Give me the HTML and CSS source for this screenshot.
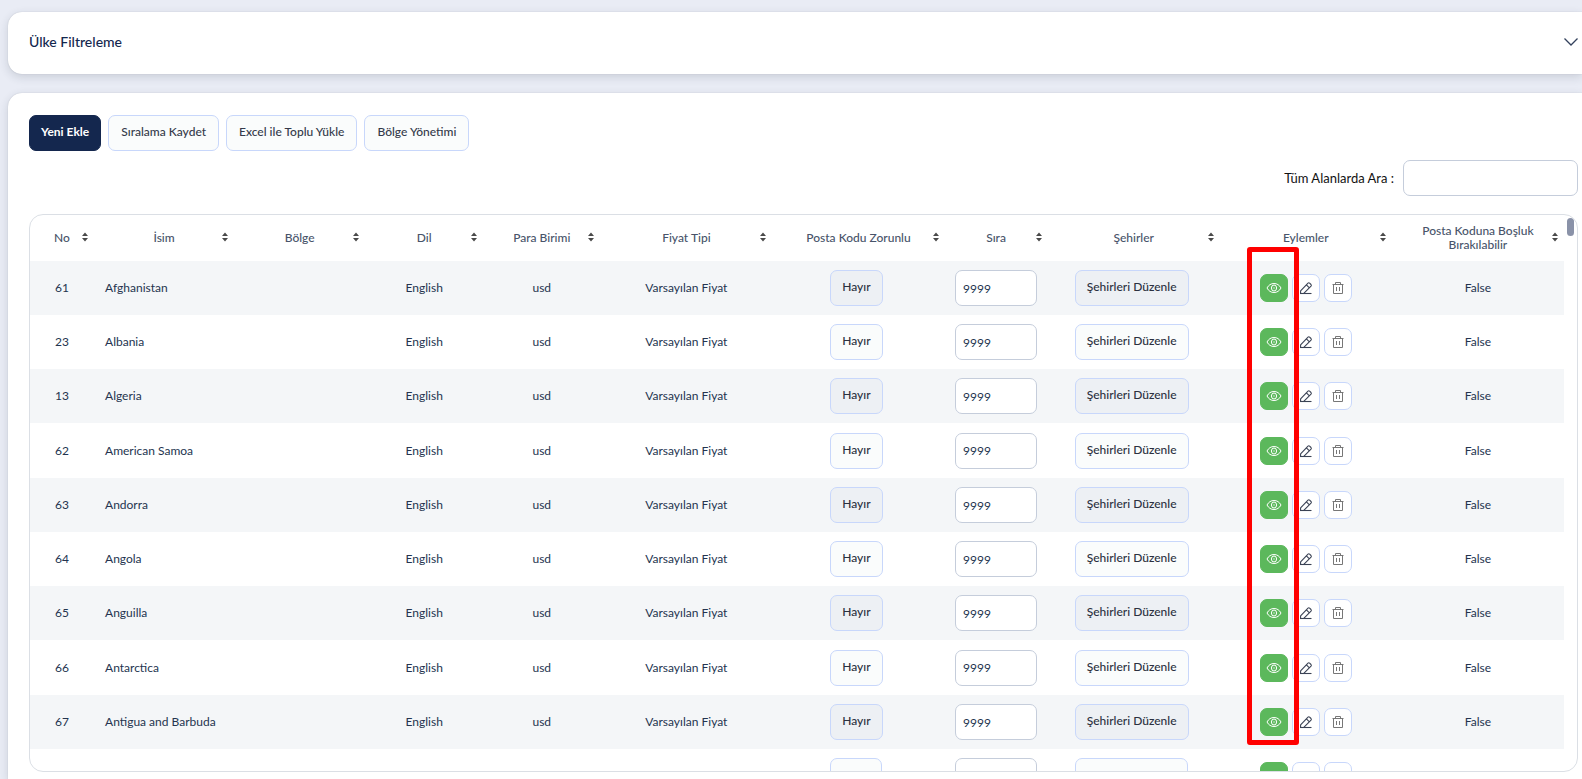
FILE: index.html
```html
<!DOCTYPE html>
<html lang="tr">
<head>
<meta charset="utf-8">
<title>Ülke Yönetimi</title>
<link rel="stylesheet" href="styles.css">
</head>
<body>
<svg class="sprite" aria-hidden="true">
  <symbol id="icon-sort" viewBox="0 0 8 10"><path d="M4 0.400 7 4H1zM4 9.600 1 6h6z" fill="currentColor"/></symbol>
  <symbol id="icon-eye" viewBox="0 0 16 16"><g fill="none" stroke="currentColor"><path d="M1 8C2.600 5 5 3.500 8 3.500S13.400 5 15 8c-1.600 3-4 4.500-7 4.500S2.600 11 1 8z"/><ellipse cx="8" cy="8" rx="2.600" ry="3"/><path d="M8 7.200v1.600" stroke-width=".8"/></g></symbol>
  <symbol id="icon-edit" viewBox="0 0 16 16"><g fill="none" stroke="currentColor" stroke-width="1.100" stroke-linejoin="round"><path d="M2.600 13.400V10.900L10 3.100q.8-.7 1.600 0L13 4.500q.7.800 0 1.600L5.800 13.400M8.400 4.800l3 3"/><path d="M2 13.500h11.500"/></g></symbol>
  <symbol id="icon-trash" viewBox="0 0 16 16"><g fill="none" stroke="currentColor"><path d="M2.500 4.500h11M5.500 4.500v-2h5v2M3.500 4.500v9h9v-9"/><path d="M6.500 7v4M9.500 7v4"/></g></symbol>
</svg>
<main class="page">
  <section class="panel filter">
    <h2 class="filter-title">Ülke Filtreleme</h2>
    <button class="filter-toggle" type="button" aria-label="Filtreyi aç"><svg width="14" height="8" viewBox="0 0 14 8"><path d="M.5.5 7 7 13.500.5" fill="none" stroke="currentColor" stroke-width="1.300"/></svg></button>
  </section>
  <section class="panel list">
    <div class="toolbar">
      <button class="btn btn-dark" type="button">Yeni Ekle</button>
      <button class="btn" type="button">Sıralama Kaydet</button>
      <button class="btn" type="button">Excel ile Toplu Yükle</button>
      <button class="btn" type="button">Bölge Yönetimi</button>
    </div>
    <div class="search">
      <label for="search">Tüm Alanlarda Ara :</label>
      <input class="field search-field" id="search" type="text">
    </div>
    <div class="table-wrap">
      <table class="countries">
        <colgroup><col class="c-no"><col class="c-name"><col class="c-region"><col class="c-lang"><col class="c-money"><col class="c-wide"><col class="c-wide"><col class="c-order"><col class="c-wide"><col class="c-wide"><col class="c-wide"></colgroup>
        <thead><tr id="head"></tr></thead>
        <tbody id="rows"></tbody>
      </table>
      <span class="thumb"></span>
    </div>
  </section>
</main>
<script src="app.js"></script>
</body>
</html>
```
FILE: styles.css
```css
* { box-sizing: border-box; }
body {
  margin: 0;
  background: #e9ecf5;
  color: #24344f;
  font: 12px/14px Lato, "Noto Sans", sans-serif;
}
button, input { font: inherit; color: inherit; }
.sprite { display: none; }
.page {
  display: flex;
  flex-direction: column;
  gap: 19px;
  height: 100vh;
  padding: 12px 0 0 8px;
  overflow: hidden;
}
.panel {
  background: #fff;
  border-radius: 14px 0 0 14px;
  box-shadow: 0 0 1px rgba(40, 50, 70, .25), 0 3px 10px rgba(40, 50, 70, .16);
}
.filter {
  display: flex;
  align-items: center;
  justify-content: space-between;
  min-height: 62px;
  padding: 0 4px 2px 21px;
}
.filter-title {
  margin: 0;
  color: #14274e;
  font-size: 14px;
  line-height: 20px;
  font-weight: 500;
}
.filter-toggle {
  display: flex;
  padding: 0;
  border: 0;
  background: none;
  color: #33415c;
}
.list {
  flex: 1;
  display: flex;
  flex-direction: column;
  min-height: 0;
  padding: 22px 4px 7px 21px;
  border-radius: 14px 0 0 0;
}
.toolbar { display: flex; gap: 7px; }
.btn {
  height: 36px;
  padding: 0 12px 2px;
  border: 1px solid #c8d7fb;
  border-radius: 7px;
  background: #fafcfc;
  color: #343a4a;
  font-weight: 500;
  white-space: nowrap;
}
.btn-dark {
  padding: 0 11px 2px;
  border-color: #14274e;
  background: #14274e;
  color: #fff;
  font-weight: 700;
}
.search {
  display: flex;
  align-items: center;
  justify-content: flex-end;
  gap: 9px;
  margin: 9px 0 18px;
  color: #111;
  font-size: 13px;
}
.field {
  height: 36px;
  padding: 0 7px;
  border: 1px solid #c5cddb;
  border-radius: 7px;
  background: #fff;
}
.search-field { width: 175px; }
.table-wrap {
  position: relative;
  flex: 1;
  min-height: 0;
  padding-right: 13px;
  border: 1px solid #dbdfe5;
  border-radius: 14px;
  overflow: hidden;
}
.thumb {
  position: absolute;
  top: 3px;
  right: 3px;
  width: 7px;
  height: 18px;
  border-radius: 4px;
  background: #8a92a8;
}
.countries {
  width: 100%;
  table-layout: fixed;
  border-collapse: collapse;
  text-align: center;
}
.c-no { width: 64px; }
.c-name { width: 140px; }
.c-region { width: 131px; }
.c-lang { width: 118px; }
.c-money { width: 117px; }
.c-wide { width: 172px; }
.c-order { width: 103px; }
.countries th {
  position: relative;
  height: 46px;
  padding: 0 18px;
  color: #48546a;
  font-weight: 500;
}
.sort {
  position: absolute;
  top: 50%;
  right: 5px;
  width: 8px;
  height: 10px;
  margin-top: -6px;
  color: #4a4a4a;
}
.countries td { height: 54px; padding: 0; }
.countries tbody tr:nth-child(4n) td { height: 55px; }
.countries td.name { padding-left: 11px; text-align: left; }
.countries tbody tr:nth-child(odd) { background: #f4f6f8; }
.countries .btn { min-width: 52px; margin-right: 4px; padding: 0 11px 2px; color: #2b3140; }
.countries .btn-cities { min-width: 113px; }
.countries tr:nth-child(odd) .btn { background: #edf0f4; }
.order-field { width: 82px; }
.actions { display: flex; justify-content: center; gap: 4px; }
.icon-btn {
  display: grid;
  place-items: center;
  width: 28px;
  height: 28px;
  padding: 0;
  border: 1px solid #c8d7fb;
  border-radius: 7px;
  background: #fff;
  color: #3a4254;
}
.icon-btn svg { width: 16px; height: 16px; }
.icon-btn.view { border-color: #5cb85c; background: #5cb85c; color: #fff; }
.icon-btn.remove { color: #777; }
.highlight {
  position: absolute;
  z-index: 1;
  top: 32px;
  left: calc(50% - 59px);
  width: 52px;
  height: 498px;
  border: 5px solid #f00;
  border-radius: 3px;
  pointer-events: none;
}
```
FILE: app.js
```js
const icon = (id, cls = "") => `<svg class="${cls}"><use href="#icon-${id}"/></svg>`;
const heads = ["No", "İsim", "Bölge", "Dil", "Para Birimi", "Fiyat Tipi", "Posta Kodu Zorunlu", "Sıra", "Şehirler", "Eylemler", "Posta Koduna Boşluk Bırakılabilir"];
const defaults = { lang: "English", money: "usd", price: "Varsayılan Fiyat", zip: "Hayır", order: "9999", cities: "Şehirleri Düzenle", gap: "False" };
const blank = { lang: "", money: "", price: "", zip: "", order: "", cities: "", gap: "" };
const countries = [
  [61, "Afghanistan"], [23, "Albania"], [13, "Algeria"], [62, "American Samoa"], [63, "Andorra"],
  [64, "Angola"], [65, "Anguilla"], [66, "Antarctica"], [67, "Antigua and Barbuda"], ["", ""]
];
document.getElementById("head").innerHTML = heads.map(h =>
  `<th scope="col">${h}${icon("sort", "sort")}${h === "Eylemler" ? '<span class="highlight"></span>' : ""}</th>`).join("");
document.getElementById("rows").innerHTML = countries.map(([no, name]) => {
  const d = name ? defaults : blank;
  return `<tr>
  <td>${no}</td><td class="name">${name}</td><td></td><td>${d.lang}</td><td>${d.money}</td><td>${d.price}</td>
  <td><button class="btn" type="button" aria-label="Posta kodu zorunlu">${d.zip}</button></td>
  <td><input class="field order-field" type="text" value="${d.order}" aria-label="${name} sıra"></td>
  <td><button class="btn btn-cities" type="button" aria-label="Şehirleri düzenle">${d.cities}</button></td>
  <td><div class="actions">
    <button class="icon-btn view" type="button" aria-label="Görüntüle">${name ? icon("eye") : ""}</button>
    <button class="icon-btn" type="button" aria-label="Düzenle">${name ? icon("edit") : ""}</button>
    <button class="icon-btn remove" type="button" aria-label="Sil">${name ? icon("trash") : ""}</button>
  </div></td><td>${d.gap}</td></tr>`;
}).join("");
```
